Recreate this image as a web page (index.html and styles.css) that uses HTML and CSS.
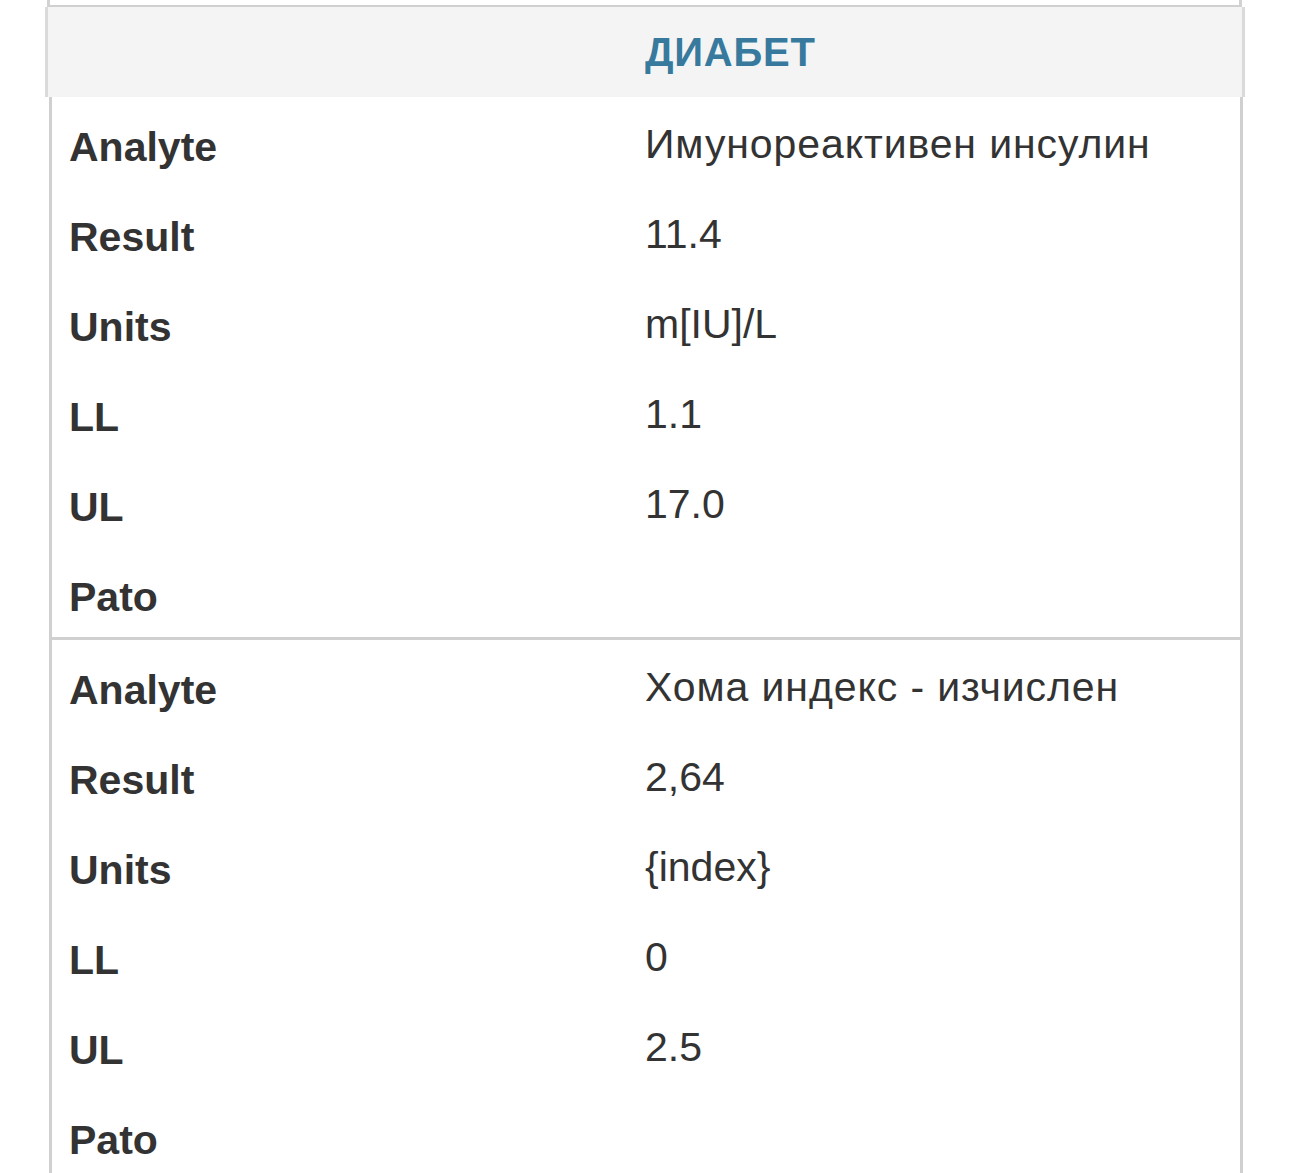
FILE: index.html
```html
<!DOCTYPE html>
<html lang="bg">
<head>
<meta charset="utf-8">
<title>Диабет</title>
<link rel="stylesheet" href="styles.css">
</head>
<body>
<div class="wrap">
  <div class="prev"></div>
  <div class="head">
    <div class="head-spacer"></div>
    <div class="head-title">ДИАБЕТ</div>
  </div>
  <div class="group">
    <div class="label">Analyte</div><div class="value cyr">Имунореактивен инсулин</div>
    <div class="label">Result</div><div class="value">11.4</div>
    <div class="label">Units</div><div class="value">m[IU]/L</div>
    <div class="label">LL</div><div class="value">1.1</div>
    <div class="label">UL</div><div class="value">17.0</div>
    <div class="label">Pato</div><div class="value"></div>
  </div>
  <div class="group sep">
    <div class="label">Analyte</div><div class="value cyr">Хома индекс - изчислен</div>
    <div class="label">Result</div><div class="value">2,64</div>
    <div class="label">Units</div><div class="value">{index}</div>
    <div class="label">LL</div><div class="value">0</div>
    <div class="label">UL</div><div class="value">2.5</div>
    <div class="label">Pato</div><div class="value"></div>
  </div>
</div>
</body>
</html>
```
FILE: styles.css
```css
html, body {
  margin: 0;
  padding: 0;
  background: #ffffff;
}
body {
  font-family: "Liberation Sans", Arial, sans-serif;
  color: #333333;
  overflow: hidden;
}
.wrap {
  width: 1200px;
  margin-left: 45px;
}
.prev {
  height: 5px;
  margin: 0 3px 0 2px;
  border-left: 3px solid #d2d2d2;
  border-right: 3px solid #d2d2d2;
  border-bottom: 2px solid #d0d0d0;
}
.head {
  display: grid;
  grid-template-columns: 597px 1fr;
  height: 90px;
  background: #f4f4f4;
  border-left: 3px solid #dadada;
  border-right: 3px solid #dadada;
}
.head-title {
  font-weight: bold;
  font-size: 40px;
  line-height: 90px;
  color: #377a9e;
  letter-spacing: 0.8px;
}
.group {
  display: grid;
  grid-template-columns: 593px 1fr;
  grid-auto-rows: 90px;
  margin: 0 2px 0 4px;
  border-left: 3px solid #d0d0d0;
  border-right: 3px solid #d0d0d0;
}
.group.sep {
  border-top: 3px solid #d0d0d0;
}
.label {
  font-weight: bold;
  font-size: 41px;
  line-height: 80px;
  padding: 10px 0 0 17px;
  color: #333333;
}
.value {
  font-size: 41px;
  line-height: 80px;
  padding: 7px 0 3px 0;
  color: #333333;
}
.value.cyr {
  letter-spacing: 0.9px;
}
```
